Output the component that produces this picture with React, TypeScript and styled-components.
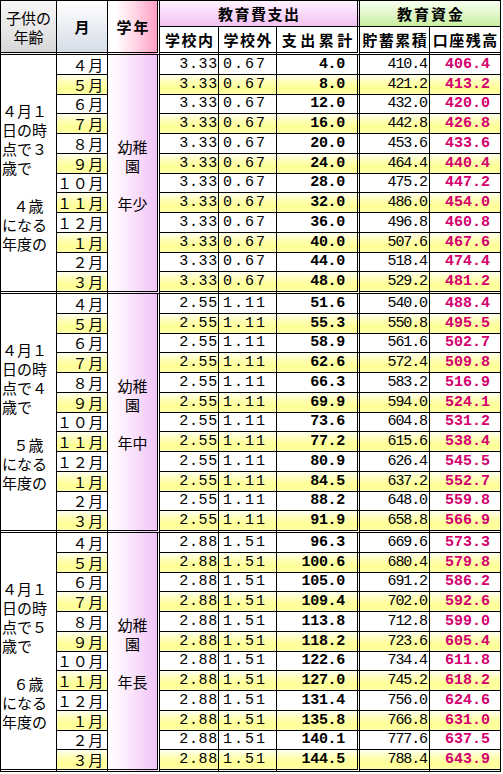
import React from "react";
import styled, { createGlobalStyle, css } from "styled-components";

const GlobalStyle = createGlobalStyle`
  html, body { margin: 0; padding: 0; background: #fff; }
  body { font-family: "Noto Sans CJK JP", "Noto Sans", sans-serif; }
`;

const Sheet = styled.table`
  border-collapse: separate;
  border-spacing: 0;
  table-layout: fixed;
  width: 501px;
  border-top: 1px solid #000;
  border-left: 1px solid #000;
  color: #000;
  font-family: "Noto Sans CJK JP", sans-serif;
`;

const Col = styled.col<{ $w: number }>`
  width: ${(p) => p.$w}px;
`;

const HeadRow = styled.tr<{ $h: number }>`
  height: ${(p) => p.$h}px;
`;

type Tone = "gray" | "blue" | "pink" | "violet" | "green" | "white";

const tones: Record<Tone, string> = {
  gray: "linear-gradient(to bottom, #f7f7f7 0%, #e6e6e6 60%, #d6d6d6 100%)",
  blue: "linear-gradient(to bottom, #ffffff 0%, #eef1f5 40%, #d6dde7 100%)",
  pink: "linear-gradient(to right, #ffffff 15%, #ffd6e6 55%, #ff9dc3 100%)",
  violet: "linear-gradient(to bottom, #fff2ff 0%, #f9daf9 50%, #f2c0f2 100%)",
  green: "linear-gradient(to bottom, #f8fff0 0%, #e2f8cc 50%, #c8ee9f 100%)",
  white: "#ffffff",
};

const HeadCell = styled.th<{
  $tone: Tone;
  $double?: boolean;
  $bottomDouble?: boolean;
  $ls?: number;
  $light?: boolean;
}>`
  padding: 0;
  font-size: 15px;
  font-weight: ${(p) => (p.$light ? 400 : 700)};
  line-height: 19px;
  text-align: center;
  vertical-align: middle;
  white-space: nowrap;
  overflow: hidden;
  letter-spacing: ${(p) => p.$ls ?? 0}px;
  text-indent: ${(p) => p.$ls ?? 0}px;
  background: ${(p) => tones[p.$tone]};
  border-right: ${(p) => (p.$double ? "3px double #000" : "1px solid #000")};
  border-bottom: ${(p) => (p.$bottomDouble ? "3px double #000" : "1px solid #000")};
`;

const DataRow = styled.tr<{ $last: boolean }>`
  height: ${(p) => (p.$last ? 21.75 : 19.75)}px;
`;

const yellow =
  "linear-gradient(to bottom, #fffff2 0%, #ffffb8 35%, #ffff96 70%, #ffffa8 100%)";

const edge = css<{ $last?: boolean }>`
  border-bottom: ${(p) => (p.$last ? "3px double #000" : "1px solid #000")};
`;

const AgeCell = styled.td`
  padding: 8px 0 0 0;
  background: #fff;
  border-right: 1px solid #000;
  border-bottom: 3px double #000;
  vertical-align: middle;
  text-align: center;
  font-size: 15px;
  line-height: 19px;
`;

const GradeCell = styled.td`
  padding: 4px 0 0 0;
  background: linear-gradient(to right, #ffffff 0%, #fbe6fc 45%, #f1c3f7 100%);
  border-right: 3px double #000;
  border-bottom: 3px double #000;
  vertical-align: middle;
  text-align: center;
  font-size: 15px;
  line-height: 19px;
`;

const Line = styled.div<{ $indent?: boolean }>`
  height: 19px;
  white-space: nowrap;
  text-align: ${(p) => (p.$indent ? "center" : "left")};
  padding-left: ${(p) => (p.$indent ? 0 : 1)}px;
`;

const MonthCell = styled.td<{ $alt: boolean; $last: boolean }>`
  padding: 0 3px 0 0;
  font-size: 15px;
  line-height: 1;
  letter-spacing: 0.7px;
  text-align: right;
  vertical-align: middle;
  white-space: nowrap;
  background: ${(p) => (p.$alt ? yellow : "#fff")};
  border-right: 1px solid #000;
  ${edge}
`;

type NumKind = "inSchool" | "outSchool" | "spend" | "savings" | "balance";

const numStyles: Record<NumKind, ReturnType<typeof css>> = {
  inSchool: css`
    text-align: right;
    padding-right: 0;
    letter-spacing: 0.7px;
  `,
  outSchool: css`
    text-align: left;
    padding-left: 4px;
    letter-spacing: 2px;
  `,
  spend: css`
    text-align: right;
    padding-right: 12px;
    font-weight: 700;
    letter-spacing: -0.3px;
    border-right: 3px double #000 !important;
  `,
  savings: css`
    text-align: right;
    padding-right: 2px;
    letter-spacing: -1.1px;
  `,
  balance: css`
    text-align: right;
    padding-right: 10px;
    font-weight: 700;
    letter-spacing: 0px;
    color: #d4006e;
  `,
};

const NumCell = styled.td<{ $alt: boolean; $last: boolean; $kind: NumKind }>`
  padding: 0;
  font-family: "Liberation Mono", "DejaVu Sans Mono", monospace;
  font-size: 15px;
  line-height: 1;
  vertical-align: middle;
  white-space: nowrap;
  overflow: hidden;
  background: ${(p) => (p.$alt ? yellow : "#fff")};
  border-right: 1px solid #000;
  ${edge}
  ${(p) => numStyles[p.$kind]}
`;

const months = [
  "４月", "５月", "６月", "７月", "８月", "９月",
  "１０月", "１１月", "１２月", "１月", "２月", "３月",
];

type Section = {
  age: string;
  next: string;
  grade: string;
  inSchool: string;
  outSchool: string;
  spend: string[];
  savings: string[];
  balance: string[];
};

const sections: Section[] = [
  {
    age: "３",
    next: "４",
    grade: "年少",
    inSchool: "3.33",
    outSchool: "0.67",
    spend: ["4.0", "8.0", "12.0", "16.0", "20.0", "24.0", "28.0", "32.0", "36.0", "40.0", "44.0", "48.0"],
    savings: ["410.4", "421.2", "432.0", "442.8", "453.6", "464.4", "475.2", "486.0", "496.8", "507.6", "518.4", "529.2"],
    balance: ["406.4", "413.2", "420.0", "426.8", "433.6", "440.4", "447.2", "454.0", "460.8", "467.6", "474.4", "481.2"],
  },
  {
    age: "４",
    next: "５",
    grade: "年中",
    inSchool: "2.55",
    outSchool: "1.11",
    spend: ["51.6", "55.3", "58.9", "62.6", "66.3", "69.9", "73.6", "77.2", "80.9", "84.5", "88.2", "91.9"],
    savings: ["540.0", "550.8", "561.6", "572.4", "583.2", "594.0", "604.8", "615.6", "626.4", "637.2", "648.0", "658.8"],
    balance: ["488.4", "495.5", "502.7", "509.8", "516.9", "524.1", "531.2", "538.4", "545.5", "552.7", "559.8", "566.9"],
  },
  {
    age: "５",
    next: "６",
    grade: "年長",
    inSchool: "2.88",
    outSchool: "1.51",
    spend: ["96.3", "100.6", "105.0", "109.4", "113.8", "118.2", "122.6", "127.0", "131.4", "135.8", "140.1", "144.5"],
    savings: ["669.6", "680.4", "691.2", "702.0", "712.8", "723.6", "734.4", "745.2", "756.0", "766.8", "777.6", "788.4"],
    balance: ["573.3", "579.8", "586.2", "592.6", "599.0", "605.4", "611.8", "618.2", "624.6", "631.0", "637.5", "643.9"],
  },
];

function SectionRows({ s }: { s: Section }) {
  return (
    <tbody>
      {months.map((m, i) => {
        const alt = i % 2 === 1;
        const last = i === months.length - 1;
        return (
          <DataRow key={m} $last={last}>
            {i === 0 && (
              <AgeCell rowSpan={12}>
                <Line>４月１</Line>
                <Line>日の時</Line>
                <Line>点で{s.age}</Line>
                <Line>歳で</Line>
                <Line />
                <Line $indent>{s.next}歳</Line>
                <Line>になる</Line>
                <Line>年度の</Line>
              </AgeCell>
            )}
            <MonthCell $alt={alt} $last={last}>{m}</MonthCell>
            {i === 0 && (
              <GradeCell rowSpan={12}>
                <Line $indent>幼稚</Line>
                <Line $indent>園</Line>
                <Line />
                <Line $indent>{s.grade}</Line>
              </GradeCell>
            )}
            <NumCell $alt={alt} $last={last} $kind="inSchool">{s.inSchool}</NumCell>
            <NumCell $alt={alt} $last={last} $kind="outSchool">{s.outSchool}</NumCell>
            <NumCell $alt={alt} $last={last} $kind="spend">{s.spend[i]}</NumCell>
            <NumCell $alt={alt} $last={last} $kind="savings">{s.savings[i]}</NumCell>
            <NumCell $alt={alt} $last={last} $kind="balance">{s.balance[i]}</NumCell>
          </DataRow>
        );
      })}
    </tbody>
  );
}

export default function App() {
  return (
    <>
      <GlobalStyle />
      <Sheet>
        <colgroup>
          <Col $w={56} />
          <Col $w={51} />
          <Col $w={52} />
          <Col $w={59} />
          <Col $w={58} />
          <Col $w={83} />
          <Col $w={70} />
          <Col $w={71} />
        </colgroup>
        <thead>
          <HeadRow $h={26}>
            <HeadCell rowSpan={2} $tone="gray" $bottomDouble $light>
              子供の
              <br />
              年齢
            </HeadCell>
            <HeadCell rowSpan={2} $tone="blue" $bottomDouble>
              月
            </HeadCell>
            <HeadCell rowSpan={2} $tone="pink" $bottomDouble $double $ls={2}>
              学年
            </HeadCell>
            <HeadCell colSpan={3} $tone="violet" $double $ls={1.5}>
              教育費支出
            </HeadCell>
            <HeadCell colSpan={2} $tone="green" $ls={2}>
              教育資金
            </HeadCell>
          </HeadRow>
          <HeadRow $h={28}>
            <HeadCell $tone="white" $bottomDouble $ls={1.5}>学校内</HeadCell>
            <HeadCell $tone="white" $bottomDouble $ls={1.5}>学校外</HeadCell>
            <HeadCell $tone="white" $bottomDouble $double $ls={3.5}>支出累計</HeadCell>
            <HeadCell $tone="white" $bottomDouble $ls={1.5}>貯蓄累積</HeadCell>
            <HeadCell $tone="white" $bottomDouble $ls={1.5}>口座残高</HeadCell>
          </HeadRow>
        </thead>
        {sections.map((s) => (
          <SectionRows key={s.grade} s={s} />
        ))}
      </Sheet>
    </>
  );
}
